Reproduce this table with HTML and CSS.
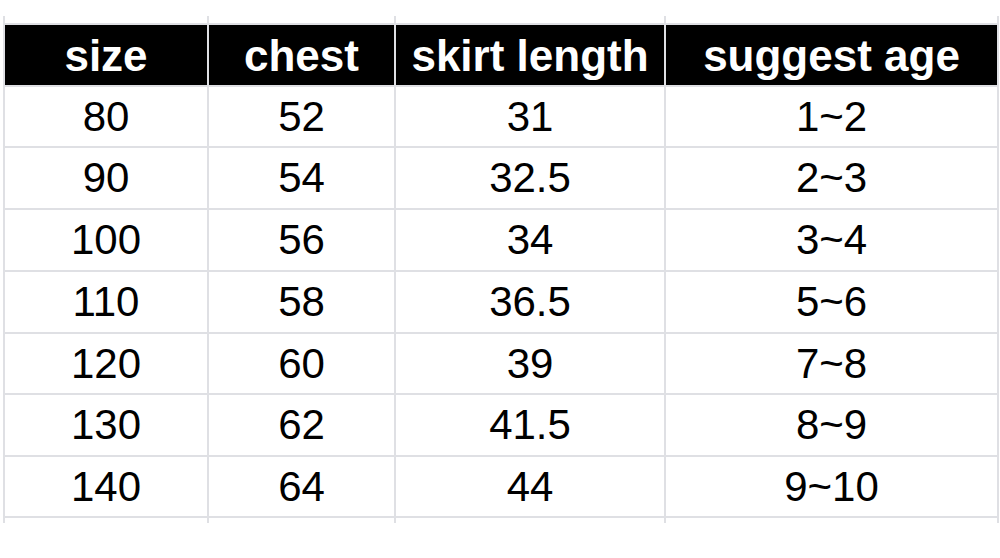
FILE: index.html
```html
<!DOCTYPE html>
<html>
<head>
<meta charset="utf-8">
<link rel="stylesheet" href="styles.css">
</head>
<body>
<div class="sheet">
  <div class="ext"></div><div class="ext"></div><div class="ext"></div><div class="ext"></div>
  <div class="th">size</div><div class="th">chest</div><div class="th">skirt length</div><div class="th">suggest age</div>
  <div class="td">80</div><div class="td">52</div><div class="td">31</div><div class="td">1~2</div>
  <div class="td">90</div><div class="td">54</div><div class="td">32.5</div><div class="td">2~3</div>
  <div class="td">100</div><div class="td">56</div><div class="td">34</div><div class="td">3~4</div>
  <div class="td">110</div><div class="td">58</div><div class="td">36.5</div><div class="td">5~6</div>
  <div class="td">120</div><div class="td">60</div><div class="td">39</div><div class="td">7~8</div>
  <div class="td">130</div><div class="td">62</div><div class="td">41.5</div><div class="td">8~9</div>
  <div class="td">140</div><div class="td">64</div><div class="td">44</div><div class="td">9~10</div>
  <div class="ext"></div><div class="ext"></div><div class="ext"></div><div class="ext"></div>
</div>
</body>
</html>
```
FILE: styles.css
```css
html, body {
  margin: 0;
  padding: 0;
  background: #ffffff;
}
body {
  width: 1000px;
  height: 558px;
  overflow: hidden;
  font-family: "Liberation Sans", Arial, Helvetica, sans-serif;
}
.sheet {
  margin: 16px 0 0 3px;
  width: 992px;
  padding: 0 2px;
  background: #dfe0e4;
  display: grid;
  grid-template-columns: 202px 185px 268px 331px;
  grid-template-rows: 7px 60px 59px 60px 60px 60px 59px 60px 59px 5px;
  column-gap: 2px;
  row-gap: 2px;
}
.ext {
  background: #ffffff;
}
.th {
  background: #000000;
  color: #ffffff;
  font-weight: bold;
  font-size: 44px;
  display: flex;
  align-items: center;
  justify-content: center;
  padding-top: 2px;
}
.td {
  background: #ffffff;
  color: #000000;
  font-size: 42px;
  display: flex;
  align-items: center;
  justify-content: center;
}
```
